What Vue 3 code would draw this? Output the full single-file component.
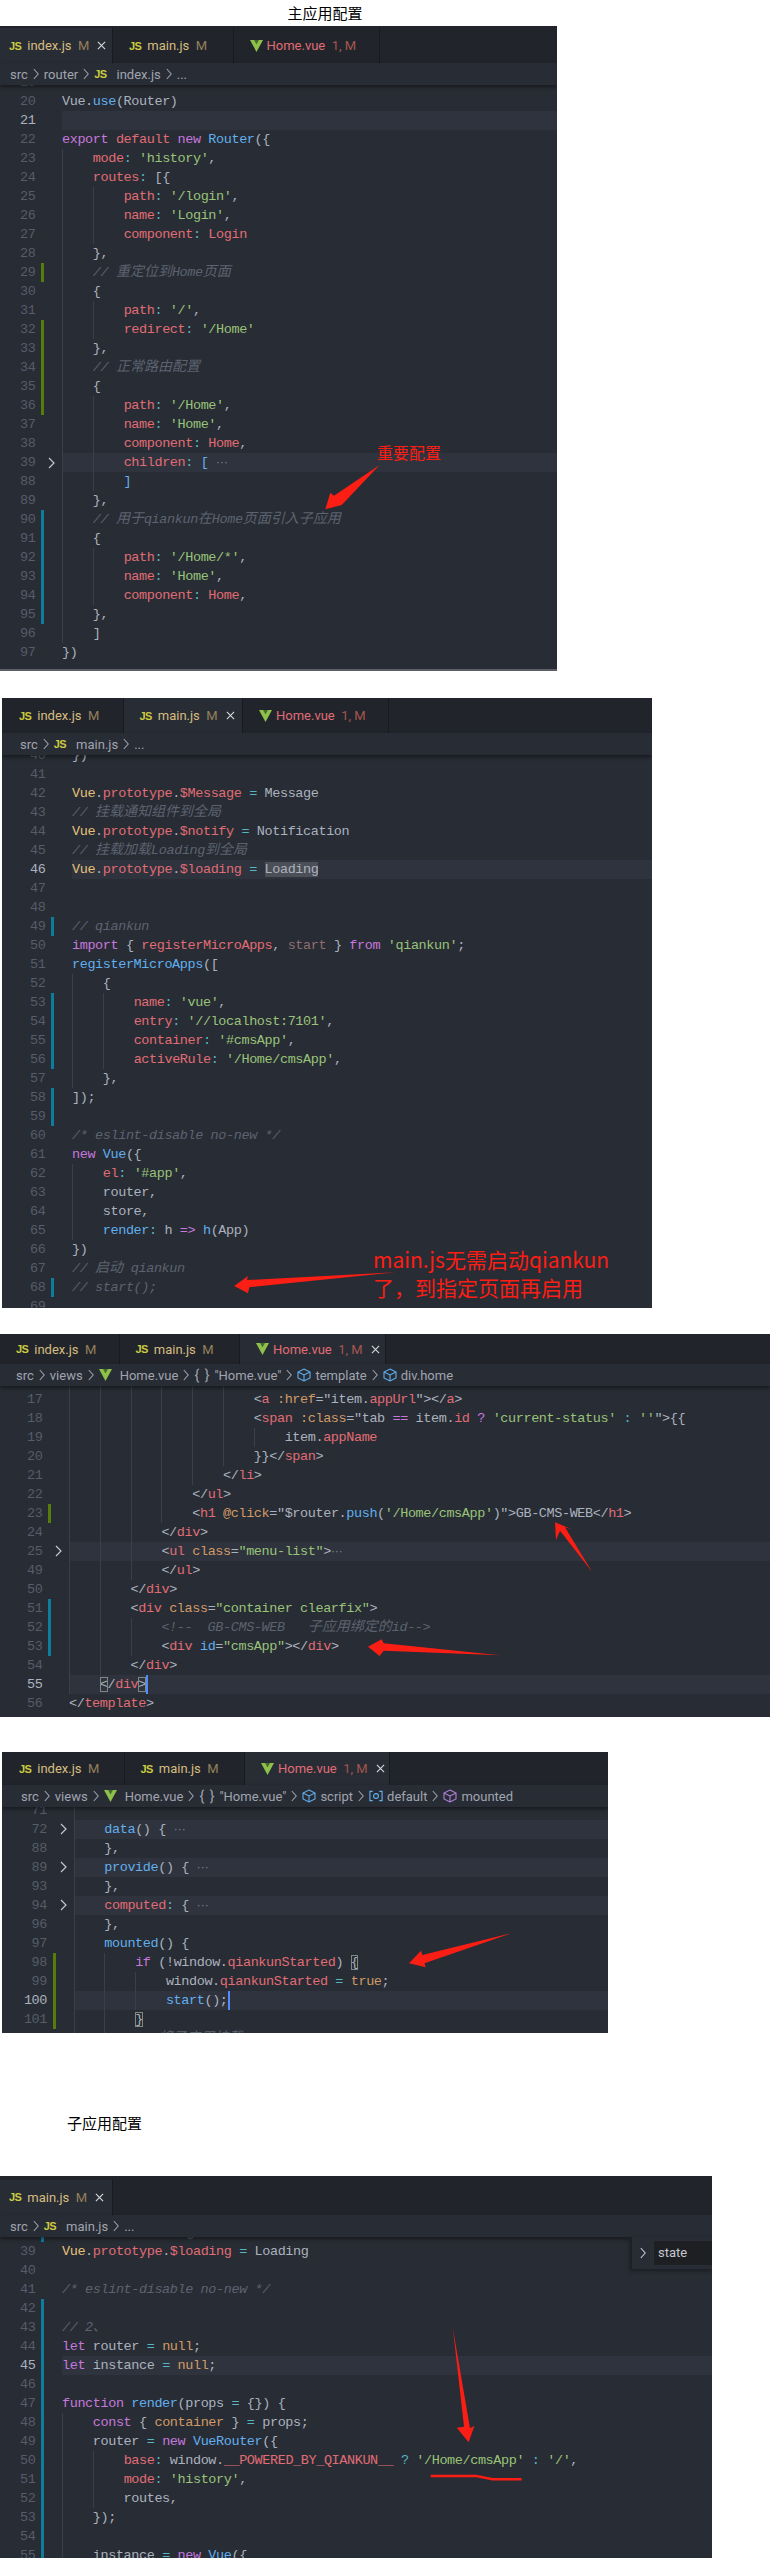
<script setup>
const parse = (s) =>
  s.split('§').filter(Boolean).map((seg) => ({ c: seg[0], t: seg.slice(1) }))

const L = (n, s = '', flags = '', guides = null) => {
  const segs = parse(s)
  const plain = segs.map((x) => x.t).join('')
  const lead = plain.length - plain.trimStart().length
  const g = guides === null ? Math.floor(lead / 4) : guides
  return {
    n,
    segs,
    guides: Array.from({ length: plain.trim() || guides !== null ? g : 0 }, (_, i) => i * 30.8),
    bar: flags.includes('g') ? 'green' : flags.includes('b') ? 'blue' : '',
    fold: flags.includes('f'),
    hl: flags.includes('h') || flags.includes('f'),
    act: flags.includes('a')
  }
}

const js = (name, w, extra = {}) => ({ icon: 'js', name, badge: 'M', w, pad: 16, ...extra })
const home = (w, extra = {}) => ({ icon: 'vue', name: 'Home.vue', badge: '1, M', w, pad: 16, ...extra })

const panels = [
  {
    id: 'p1',
    tabs: [js('index.js', 113, { pad: 9, active: true }), js('main.js', 120.5), home(146.5)],
    crumbs: [{ t: 'src' }, { t: 'router' }, { i: 'js', t: 'index.js' }, { t: '...' }],
    lines: [
      L(19),
      L(20, 'wVue.§buse§w(Router)'),
      L(21, '', 'ha'),
      L(22, 'pexport §rdefault §pnew §bRouter§w({'),
      L(23, 'w    §rmode§c: §g\'history\'§w,'),
      L(24, 'w    §rroutes§c: §w[{'),
      L(25, 'w        §rpath§c: §g\'/login\'§w,'),
      L(26, 'w        §rname§c: §g\'Login\'§w,'),
      L(27, 'w        §rcomponent§c: §rLogin'),
      L(28, 'w    },'),
      L(29, 'm    // §z重定位到§mHome§z页面', 'g'),
      L(30, 'w    {'),
      L(31, 'w        §rpath§c: §g\'/\'§w,'),
      L(32, 'w        §rredirect§c: §g\'/Home\'', 'g'),
      L(33, 'w    },', 'g'),
      L(34, 'm    // §z正常路由配置', 'g'),
      L(35, 'w    {', 'g'),
      L(36, 'w        §rpath§c: §g\'/Home\'§w,', 'g'),
      L(37, 'w        §rname§c: §g\'Home\'§w,'),
      L(38, 'w        §rcomponent§c: §rHome§w,'),
      L(39, 'w        §rchildren§c: §b[ §e···', 'f'),
      L(88, 'b        ]'),
      L(89, 'w    },'),
      L(90, 'm    // §z用于§mqiankun§z在§mHome§z页面引入子应用', 'b'),
      L(91, 'w    {', 'b'),
      L(92, 'w        §rpath§c: §g\'/Home/*\'§w,', 'b'),
      L(93, 'w        §rname§c: §g\'Home\'§w,', 'b'),
      L(94, 'w        §rcomponent§c: §rHome§w,', 'b'),
      L(95, 'w    },', 'b'),
      L(96, 'w    ]'),
      L(97, 'w})')
    ]
  },
  {
    id: 'p2',
    tabs: [js('index.js', 121.5, { pad: 17 }), js('main.js', 119.5, { active: true }), home(146)],
    crumbs: [{ t: 'src' }, { i: 'js', t: 'main.js' }, { t: '...' }],
    lines: [
      L(40, 'w})'),
      L(41),
      L(42, 'yVue§w.§rprototype§w.§r$Message §c= §wMessage'),
      L(43, 'm// §z挂载通知组件到全局'),
      L(44, 'yVue§w.§rprototype§w.§r$notify §c= §wNotification'),
      L(45, 'm// §z挂载加载§mLoading§z到全局'),
      L(46, 'yVue§w.§rprototype§w.§r$loading §c= §SLoading', 'ha'),
      L(47),
      L(48),
      L(49, 'm// qiankun', 'b'),
      L(50, 'pimport §w{ §rregisterMicroApps§w, §dstart §w} §pfrom §g\'qiankun\'§w;'),
      L(51, 'bregisterMicroApps§w(['),
      L(52, 'w    {'),
      L(53, 'w        §rname§c: §g\'vue\'§w,', 'b'),
      L(54, 'w        §rentry§c: §g\'//localhost:7101\'§w,', 'b'),
      L(55, 'w        §rcontainer§c: §g\'#cmsApp\'§w,', 'b'),
      L(56, 'w        §ractiveRule§c: §g\'/Home/cmsApp\'§w,', 'b'),
      L(57, 'w    },'),
      L(58, 'w]);', 'b'),
      L(59, '', 'b'),
      L(60, 'm/* eslint-disable no-new */'),
      L(61, 'pnew §bVue§w({'),
      L(62, 'w    §rel§c: §g\'#app\'§w,'),
      L(63, 'w    router,'),
      L(64, 'w    store,'),
      L(65, 'w    §brender§c: §wh §p=> §bh§w(App)'),
      L(66, 'w})'),
      L(67, 'm// §z启动§m qiankun'),
      L(68, 'm// start();', 'b'),
      L(69)
    ]
  },
  {
    id: 'p3',
    tabs: [js('index.js', 119.5), js('main.js', 120.5), home(146, { active: true })],
    crumbs: [
      { t: 'src' },
      { t: 'views' },
      { i: 'vue', t: 'Home.vue' },
      { i: 'braces', t: '"Home.vue"' },
      { i: 'cube', t: 'template' },
      { i: 'cube', t: 'div.home' }
    ],
    lines: [
      L('', '', '', 6),
      L(17, 'w                        <§ra §o:href§w="item.§rappUrl§w"></§ra§w>'),
      L(18, 'w                        <§rspan §o:class§w="tab §p== §witem.§rid §p? §g\'current-status\' §c: §g\'\'§w">{{'),
      L(19, 'w                            item.§rappName'),
      L(20, 'w                        }}</§rspan§w>'),
      L(21, 'w                    </§rli§w>'),
      L(22, 'w                </§rul§w>'),
      L(23, 'w                <§rh1 §o@click§w="$router.§bpush§w(§g\'/Home/cmsApp\'§w)">GB-CMS-WEB</§rh1§w>', 'g'),
      L(24, 'w            </§rdiv§w>'),
      L(25, 'w            <§rul §oclass§w=§g"menu-list"§w>§e···', 'f'),
      L(49, 'w            </§rul§w>'),
      L(50, 'w        </§rdiv§w>'),
      L(51, 'w        <§rdiv §oclass§w=§g"container clearfix"§w>', 'b'),
      L(52, 'm            <!--  GB-CMS-WEB   §z子应用绑定的§mid-->', 'b'),
      L(53, 'w            <§rdiv §bid§w=§g"cmsApp"§w></§rdiv§w>', 'b'),
      L(54, 'w        </§rdiv§w>'),
      L(55, 'w    §X<§w/§rdiv§X>§C', 'ha'),
      L(56, 'w</§rtemplate§w>')
    ]
  },
  {
    id: 'p4',
    tabs: [js('index.js', 122.5, { pad: 17 }), js('main.js', 120.5), home(145, { active: true })],
    crumbs: [
      { t: 'src' },
      { t: 'views' },
      { i: 'vue', t: 'Home.vue' },
      { i: 'braces', t: '"Home.vue"' },
      { i: 'cube', t: 'script' },
      { i: 'var', t: 'default' },
      { i: 'cubeP', t: 'mounted' }
    ],
    lines: [
      L(71, '', '', 1),
      L(72, 'w    §bdata§w() { §e···', 'f'),
      L(88, 'w    },'),
      L(89, 'w    §bprovide§w() { §e···', 'f'),
      L(93, 'w    },'),
      L(94, 'w    §rcomputed§c: §w{ §e···', 'f'),
      L(96, 'w    },'),
      L(97, 'w    §bmounted§w() {'),
      L(98, 'w        §pif §w(!window.§rqiankunStarted§w) §X{', 'g'),
      L(99, 'w            window.§rqiankunStarted §c= §otrue§w;', 'g'),
      L(100, 'w            §bstart§w();§C', 'gha'),
      L(101, 'w        §X}', 'g'),
      L(102, 'm        // §z将子应用挂载')
    ]
  },
  {
    id: 'p5',
    title: '子应用配置',
    tabs: [js('main.js', 113, { pad: 9, active: true })],
    crumbs: [{ t: 'src' }, { i: 'js', t: 'main.js' }, { t: '...' }],
    state: true,
    lines: [
      L(38, 'm// §z挂载加载§mLoading§z到全局', 'b'),
      L(39, 'yVue§w.§rprototype§w.§r$loading §c= §wLoading'),
      L(40),
      L(41, 'm/* eslint-disable no-new */'),
      L(42, '', 'b'),
      L(43, 'm// 2、', 'b'),
      L(44, 'plet §wrouter §c= §onull§w;', 'b'),
      L(45, 'plet §winstance §c= §onull§w;', 'bha'),
      L(46, '', 'b'),
      L(47, 'pfunction §brender§w(props §c= §w{}) {', 'b'),
      L(48, 'w    §pconst §w{ §ocontainer §w} §c= §wprops;', 'b'),
      L(49, 'w    router §c= §pnew §bVueRouter§w({', 'b'),
      L(50, 'w        §rbase§c: §wwindow.§r__POWERED_BY_QIANKUN__ §c? §g\'/Home/cmsApp\' §c: §g\'/\'§w,', 'b'),
      L(51, 'w        §rmode§c: §g\'history\'§w,', 'b'),
      L(52, 'w        routes,', 'b'),
      L(53, 'w    });', 'b'),
      L(54, '', 'b', 1),
      L(55, 'w    instance §c= §pnew §bVue§w({', 'b')
    ]
  }
]

const arrows = [
  '379.6,465 341.7,505 325.3,509.3 330.3,492.7 334,495.7',
  '395.5,1272.3 249.3,1287.3 248,1293.3 234.2,1286 248,1276 247,1280',
  '555,1522.3 572,1529.3 565,1527.3 592,1571.7 560,1530.7 556,1540',
  '368,1646.7 381.6,1639.3 383.7,1643.3 500,1655.3 383.7,1650.7 379.6,1656',
  '409,1963.3 421,1950.7 422.4,1955 511,1933.3 424.5,1963.3 425.7,1967.3',
  '452.8,2327.7 470,2428.3 474.5,2425.7 468.6,2442.3 456.8,2427.7 464,2426.7'
]
</script>

<template>
  <div class="page">
    <p class="title">主应用配置</p>

    <template v-for="p in panels" :key="p.id">
      <p v-if="p.title" class="subtitle">{{ p.title }}</p>
      <section class="panel" :class="p.id">
        <div class="tabs">
          <div
            v-for="tab in p.tabs"
            :key="tab.name"
            class="tab"
            :class="{ active: tab.active, vue: tab.icon === 'vue' }"
            :style="{ width: tab.w + 'px', paddingLeft: tab.pad + 'px' }"
          >
            <span v-if="tab.icon === 'js'" class="js">JS</span>
            <svg v-else class="vicon" viewBox="0 0 13 12">
              <polygon points="0,0 13,0 6.5,12" fill="#8dc149" />
              <polygon points="4,0 9,0 6.5,4.6" fill="#4a6b30" />
            </svg>
            <span class="name">{{ tab.name }}</span>
            <span class="badge">{{ tab.badge }}</span>
            <svg v-if="tab.active" class="close" viewBox="0 0 10 10">
              <path d="M1 1 L9 9 M9 1 L1 9" stroke="#d7dae0" stroke-width="1.2" fill="none" />
            </svg>
          </div>
        </div>

        <div class="crumbs">
          <template v-for="(c, i) in p.crumbs" :key="i">
            <svg v-if="i" class="chev" viewBox="0 0 6 12">
              <path d="M0.8 1 L5.2 6 L0.8 11" stroke="#9aa0ac" stroke-width="1.1" fill="none" />
            </svg>
            <span class="crumb">
              <span v-if="c.i === 'js'" class="js">JS</span>
              <svg v-else-if="c.i === 'vue'" class="vicon" viewBox="0 0 13 12">
                <polygon points="0,0 13,0 6.5,12" fill="#8dc149" />
                <polygon points="4,0 9,0 6.5,4.6" fill="#4a6b30" />
              </svg>
              <span v-else-if="c.i === 'braces'" class="braces">{ }</span>
              <svg v-else-if="c.i === 'cube' || c.i === 'cubeP'" class="cube" :class="{ purple: c.i === 'cubeP' }" viewBox="0 0 14 14">
                <path d="M7 1 L13 4 V10 L7 13 L1 10 V4 Z M1 4 L7 7 L13 4 M7 7 V13" fill="none" stroke="currentColor" stroke-width="1.1" />
              </svg>
              <svg v-else-if="c.i === 'var'" class="cube" viewBox="0 0 15 14">
                <path d="M4 2 H1 V12 H4 M11 2 H14 V12 H11" fill="none" stroke="currentColor" stroke-width="1.2" />
                <circle cx="7.5" cy="7" r="2.6" fill="none" stroke="currentColor" stroke-width="1.2" />
              </svg>
              {{ c.t }}
            </span>
          </template>
        </div>

        <div class="code">
          <div v-for="l in p.lines" :key="l.n" class="line">
            <span class="num" :class="{ act: l.act }">{{ l.n }}</span>
            <span class="gut">
              <span class="bar" :class="l.bar"></span>
              <svg v-if="l.fold" class="fold" viewBox="0 0 7 12">
                <path d="M1 1 L6 6 L1 11" stroke="#c5c8d0" stroke-width="1.2" fill="none" />
              </svg>
            </span>
            <span class="text" :class="{ hl: l.hl }">
              <i v-for="g in l.guides" :key="g" class="guide" :style="{ left: g + 'px' }"></i>
              <span v-for="(s, k) in l.segs" :key="k" :class="'s-' + s.c">{{ s.t }}</span>
            </span>
          </div>
        </div>

        <div v-if="p.state" class="state">
          <svg class="chev" viewBox="0 0 6 12">
            <path d="M0.8 1 L5.2 6 L0.8 11" stroke="#c5c8d0" stroke-width="1.1" fill="none" />
          </svg>
          <span class="state-box">state</span>
        </div>
      </section>
    </template>

    <svg class="overlay" viewBox="0 0 770 2558">
      <polygon v-for="(a, i) in arrows" :key="i" :points="a" fill="#fb1e14" />
      <polyline points="430.7,2476 476.4,2476 492.6,2479.3 521.6,2479.3" fill="none" stroke="#fb1e14" stroke-width="2.4" />
    </svg>
    <span class="note note-a">重要配置</span>
    <span class="note note-b">main.js无需启动qiankun<br />了，到指定页面再启用</span>
  </div>
</template>

<style scoped>
.page {
  position: relative;
  width: 770px;
  height: 2558px;
  overflow: hidden;
  background: #fff;
  font-family: "Noto Sans CJK SC", "Liberation Sans", sans-serif;
}
.title {
  margin: 0;
  width: 650px;
  height: 26px;
  line-height: 26px;
  text-align: center;
  font-size: 15px;
  color: #000;
}
.subtitle {
  margin: 80px 0 43px 67px;
  height: 20px;
  line-height: 20px;
  font-size: 15px;
  color: #000;
}
.panel {
  position: relative;
  display: flex;
  flex-direction: column;
  overflow: hidden;
  background: #282c34;
}
.p1 { width: 557px; height: 643px; --nw: 35.5px; --bc: 10px; --top: 2px; --tabh: 35px; border-bottom: 2px solid #5c5f66; }
.p2 { width: 650px; height: 610px; margin: 27px 0 0 2px; --nw: 43.5px; --bc: 18px; --top: 0px; --tabh: 35px; }
.p3 { width: 770px; height: 383px; margin-top: 26px; --nw: 42.5px; --bc: 16px; --top: 0px; --tabh: 30px; }
.p4 { width: 606px; height: 281px; margin: 35px 0 0 2px; --nw: 45px; --bc: 19px; --top: 0px; --tabh: 33px; }
.p5 { width: 712px; height: 384px; --nw: 35.5px; --bc: 10px; --top: 3.5px; --tabh: 35.5px; }

.tabs {
  display: flex;
  flex: none;
  padding-top: var(--top);
  background: #21252b;
}
.tab {
  display: flex;
  align-items: center;
  box-sizing: border-box;
  height: var(--tabh);
  border-right: 1px solid #181a1f;
  font: 13px Roboto, sans-serif;
  color: #d7bd80;
}
.tab.active {
  background: #282c34;
}
.tab.vue {
  color: #e06c75;
}
.js {
  flex: none;
  margin-right: 6px;
  font: bold 11px "Liberation Sans", sans-serif;
  letter-spacing: -0.6px;
  color: #cbcb41;
}
.vicon {
  flex: none;
  width: 13px;
  height: 12px;
  margin-right: 4px;
}
.name {
  margin-right: 6.5px;
  white-space: nowrap;
}
.badge {
  color: #94805b;
  white-space: nowrap;
}
.tab.vue .badge {
  color: #a5564f;
}
.close {
  flex: none;
  width: 9px;
  height: 9px;
  margin-left: 8px;
}

.crumbs {
  position: relative;
  z-index: 2;
  display: flex;
  flex: none;
  align-items: center;
  gap: 5px;
  height: 22px;
  padding-left: var(--bc);
  background: #282c34;
  box-shadow: 0 2px 4px rgba(0, 0, 0, 0.45);
  font: 13px Roboto, sans-serif;
  color: #a0a5b0;
  white-space: nowrap;
}
.crumb {
  display: flex;
  align-items: center;
  gap: 4px;
}
.chev {
  flex: none;
  width: 6px;
  height: 12px;
}
.braces {
  letter-spacing: 1px;
  font-size: 14px;
}
.cube {
  width: 14px;
  height: 14px;
  color: #61afef;
}
.cube.purple {
  color: #b180d7;
}

.code {
  flex: 1;
  min-height: 0;
  overflow: hidden;
  font: 13.5px/19px "Liberation Mono", "Noto Sans CJK SC", monospace;
  letter-spacing: -0.4px;
  color: #abb2bf;
}
.p1 .code { margin-top: -11.8px; }
.p2 .code { margin-top: -8.8px; }
.p3 .code { margin-top: -15.1px; }
.p4 .code { margin-top: -6.5px; }
.p5 .code { margin-top: -13.8px; }

.line {
  display: flex;
  height: 19px;
}
.num {
  flex: none;
  width: var(--nw);
  text-align: right;
  color: #565c69;
}
.num.act {
  color: #abb2bf;
}
.gut {
  flex: none;
  display: flex;
  align-items: center;
  width: 26.5px;
  height: 19px;
}
.bar {
  flex: none;
  width: 3px;
  height: 19px;
  margin-left: 5.5px;
}
.bar.green { background: #587c0c; }
.bar.blue { background: #0c7d9d; }
.fold {
  flex: none;
  width: 7px;
  height: 12px;
  margin-left: 4px;
}
.text {
  position: relative;
  flex: 1;
  min-width: 0;
  height: 19px;
  white-space: pre;
}
.text.hl {
  background: #2f333d;
}
.guide {
  position: absolute;
  top: 0;
  width: 1px;
  height: 19px;
  background: #3b4048;
}
.s-w { color: #abb2bf; }
.s-r { color: #e06c75; }
.s-g { color: #98c379; }
.s-b { color: #61afef; }
.s-p { color: #c678dd; }
.s-y { color: #e5c07b; }
.s-o { color: #d19a66; }
.s-c { color: #56b6c2; }
.s-m { color: #5c6370; font-style: italic; }
.s-z {
  color: #5c6370;
  font-style: italic;
  font-size: 14px;
  letter-spacing: 0;
}
.s-d { color: #8f6f72; }
.s-e {
  color: #7a808c;
  font: 12px/19px "Liberation Sans", sans-serif;
  letter-spacing: 0;
}
.s-S { background: #4b4f56; }
.s-X { outline: 1px solid #7d8a82; outline-offset: -1px; }
.s-C {
  display: inline-block;
  width: 2px;
  height: 19px;
  vertical-align: top;
  background: #528bff;
}

.state {
  position: absolute;
  z-index: 3;
  top: 61px;
  left: 630px;
  display: flex;
  align-items: center;
  gap: 8px;
  box-sizing: border-box;
  width: 82px;
  height: 32px;
  padding-left: 8px;
  border-left: 2px solid #1d2026;
  background: #282c34;
  box-shadow: 0 2px 4px rgba(0, 0, 0, 0.35);
  font: 13px Roboto, sans-serif;
  color: #c5c8d0;
}
.state-box {
  flex: 1;
  height: 24px;
  padding-left: 4px;
  line-height: 24px;
  background: #1d1f23;
}

.overlay {
  position: absolute;
  z-index: 5;
  top: 0;
  left: 0;
  width: 770px;
  height: 2558px;
  pointer-events: none;
}
.note {
  position: absolute;
  z-index: 6;
  color: #fb1e14;
  white-space: nowrap;
}
.note-a {
  top: 440px;
  left: 377px;
  font-size: 16px;
  line-height: 24px;
}
.note-b {
  top: 1245px;
  left: 373px;
  font-size: 21px;
  line-height: 28px;
}
</style>
